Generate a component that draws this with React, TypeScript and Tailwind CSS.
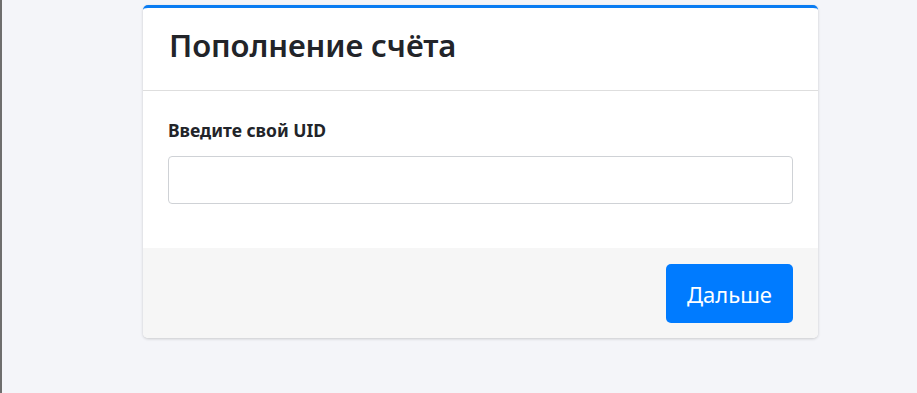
import React from "react";

export default function App() {
  return (
    <div className="w-[917px] h-[393px] bg-[#f4f5f9] border-l-2 border-[#6e6e6e] overflow-hidden" style={{ fontFamily: '"Noto Sans", "Open Sans", sans-serif' }}>
      <div className="ml-[141px] mt-[5px] w-[675px] bg-white rounded-[5px] border-t-[3px] border-[#0a7cf2] shadow-[0_1px_3px_rgba(0,0,0,0.18)] overflow-hidden">
        <div className="h-[83px] border-b border-[#dedede] px-[26px] pt-[17px]">
          <h1 className="text-[31px] font-semibold text-[#222429] leading-[40px] tracking-[-0.1px]">Пополнение счёта</h1>
        </div>
        <div className="px-[25px] pt-[29px] pb-[44px]">
          <label className="block text-[17.5px] font-bold text-[#222429] leading-[20px]">Введите свой UID</label>
          <input className="mt-[16px] block w-full h-[48px] rounded-[4px] border border-[#cfd2d6] bg-white outline-none" />
        </div>
        <div className="h-[90px] bg-[#f6f6f6] flex items-start justify-end px-[25px] pt-[16px]">
          <button className="w-[127px] h-[59px] rounded-[5px] bg-[#007bff] text-white text-[22px] leading-none">Дальше</button>
        </div>
      </div>
    </div>
  );
}
